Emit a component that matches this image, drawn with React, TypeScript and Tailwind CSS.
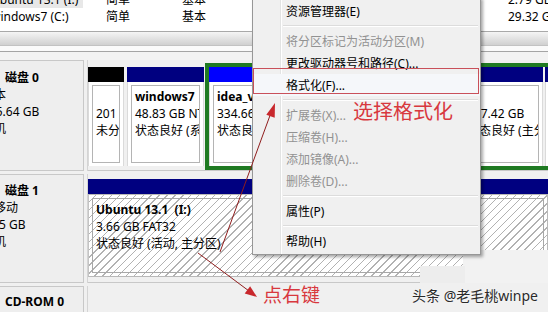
import React from "react";

function ListRow({ name, size, selected }: { name: string; size: string; selected?: boolean }) {
  return (
    <div className="flex h-[17px] items-center whitespace-nowrap">
      <div className={`w-[83px] h-[17px] shrink-0 overflow-hidden flex items-center ${selected ? "bg-[#e8e8e8]" : ""}`}>
        <span className="ml-[-9px]">{name}</span>
      </div>
      <div className="w-[76px] shrink-0 pl-[23px]">简单</div>
      <div className="w-[349px] shrink-0 pl-[23px]">基本</div>
      <div className="shrink-0">{size}</div>
    </div>
  );
}

function Part({
  outer,
  bar,
  inner,
  lines,
}: {
  outer: string;
  bar: string;
  inner: string;
  lines: [string, string, string];
}) {
  return (
    <div className={`shrink-0 ${outer}`}>
      <div className={`h-[15px] ${bar}`} />
      <div className="h-[84px] bg-white border-x border-[#dadada] p-[3px]">
        <div className={`h-full border border-[#b4b4b4] pt-[2px] overflow-hidden whitespace-nowrap ${inner}`}>
          <div className="font-bold h-[17px]">{lines[0]}</div>
          <div className="h-[17px]">{lines[1]}</div>
          <div className="h-[17px]">{lines[2]}</div>
        </div>
      </div>
    </div>
  );
}

function DiskLabel({ title, lines, pt }: { title: string; lines: string[]; pt: string }) {
  return (
    <div className={`w-[84px] shrink-0 bg-[#eeeeee] border-t border-b border-r border-[#c8c8c8] overflow-hidden whitespace-nowrap ${pt}`}>
      <div className="ml-[-18px]">
        <div className="pl-[23px] font-bold h-[17px]">{title}</div>
        {lines.map((l) => (
          <div key={l} className="h-[17px]">
            {l}
          </div>
        ))}
      </div>
    </div>
  );
}

function MenuItem({ label, disabled, hover }: { label: string; disabled?: boolean; hover?: boolean }) {
  return (
    <div
      className={`h-[22px] flex items-center pl-[33px] whitespace-nowrap ${disabled ? "text-[#929292]" : "text-black"} ${
        hover ? "bg-[#f5f7fa]" : ""
      }`}
    >
      {label}
    </div>
  );
}

function MenuSep() {
  return (
    <div className="h-[8px] flex flex-col justify-center pl-[30px] pr-[2px]">
      <div className="h-px bg-[#dcdcdc]" />
      <div className="h-px bg-white" />
    </div>
  );
}

export default function App() {
  return (
    <div className="relative w-[548px] h-[312px] overflow-hidden bg-[#f0f0f0] text-[12px] leading-[17px] text-black font-['Noto_Sans','Noto_Sans_CJK_SC',sans-serif]">
      {/* top volume list */}
      <div className="mt-[-10px] h-[41px] bg-white pt-[1px]">
        <ListRow name="Ubuntu 13.1 (I:)" size="2.79 GB" selected />
        <ListRow name="windows7 (C:)" size="29.32 GB" />
      </div>
      <div className="h-px bg-[#a9a9a9]" />
      <div className="h-[13px] bg-gradient-to-b from-[#f5f5f5] to-[#d0d0d0]" />
      <div className="h-px bg-[#c2c2c2]" />
      <div className="h-[5px] bg-[#fafafa]" />
      <div className="h-px bg-[#a5a5a5]" />
      <div className="h-[8px] bg-[#f3f3f3]" />

      {/* disks */}
      <div className="flex flex-col gap-[3px]">
        {/* disk 0 */}
        <div className="flex h-[111px]">
          <DiskLabel title="磁盘 0" lines={["基本", "465.64 GB", "联机"]} pt="pt-[8px]" />
          <div className="w-[4px] shrink-0 border-r border-[#d4d4d4]" />
          <div className="flex-1 overflow-hidden flex items-start pt-[3px] border-b border-[#c8c8c8]">
            <Part
              outer="w-[36px] mt-[4px]"
              bar="bg-black"
              inner="pl-[3px]"
              lines={["", "201 MB", "未分配"]}
            />
            <Part
              outer="w-[77px] mt-[4px] ml-[3px]"
              bar="bg-[#000080]"
              inner="pl-[3px]"
              lines={["windows7", "48.83 GB NTFS", "状态良好 (系统, 启动, 页面文件)"]}
            />
            <div className="ml-[1px] flex-1 flex border-[4px] border-r-0 border-[#1f7a22]">
              <Part
                outer="w-[246px]"
                bar="bg-[#0000ff]"
                inner="pl-[3px]"
                lines={["idea_vm", "334.66 GB NTFS", "状态良好 (逻辑驱动器)"]}
              />
              <Part
                outer="w-[85px] ml-[3px]"
                bar="bg-[#000080]"
                inner="pl-[4px]"
                lines={["", "117.42 GB", "状态良好 (主分区)"]}
              />
              <Part outer="w-[60px] ml-[2px]" bar="bg-[#000080]" inner="pl-[3px]" lines={["", "", ""]} />
            </div>
          </div>
        </div>

        {/* disk 1 */}
        <div className="flex h-[109px]">
          <DiskLabel title="磁盘 1" lines={["可移动", "3.65 GB", "联机"]} pt="pt-[7px]" />
          <div className="w-[4px] shrink-0 border-r border-[#d4d4d4]" />
          <div className="flex-1 overflow-hidden pt-[5px] border-b border-[#c8c8c8]">
            <div className="h-[15px] bg-[#000080]" />
            <div className="h-[83px] border border-[#b8b8b8] border-l-[#c4c4c4] p-[3px] bg-[repeating-linear-gradient(135deg,#ffffff_0px,#ffffff_4.6px,#b2b2b2_4.6px,#b2b2b2_5.6px)]">
              <div className="h-full border border-[#a8a8a8] pl-[3px] pt-[2px] whitespace-nowrap">
                <div className="font-bold h-[17px] whitespace-pre">Ubuntu 13.1  (I:)</div>
                <div className="h-[17px]">3.66 GB FAT32</div>
                <div className="h-[17px]">状态良好 (活动, 主分区)</div>
              </div>
            </div>
          </div>
        </div>

        {/* cd-rom */}
        <div className="flex h-[40px]">
          <div className="w-[84px] shrink-0 bg-[#eeeeee] border-t border-r border-[#c8c8c8] pt-[6px] overflow-hidden whitespace-nowrap">
            <div className="ml-[-18px] pl-[23px] font-bold">CD-ROM 0</div>
          </div>
          <div className="w-[4px] shrink-0 border-r border-[#d4d4d4]" />
          <div className="flex-1 bg-[#f0f0f0]" />
        </div>
      </div>

      {/* watermark blur patch */}
      <div className="absolute left-[463px] top-[250px] w-[85px] h-[33px] bg-[#f2f2f2]" />
      <div className="absolute left-[420px] top-[266px] w-[45px] h-[17px] bg-[#ededed]" />

      {/* context menu */}
      <div className="absolute left-[252px] top-[-3px] w-[229px] bg-[#f0f0f0] border border-[#979797] py-[2px] shadow-[2px_2px_3px_rgba(0,0,0,0.35)]">
        <div className="absolute left-[27px] top-0 bottom-0 w-px bg-[#e2e3e3]" />
        <div className="absolute left-[28px] top-0 bottom-0 w-px bg-white" />
        <div className="relative">
          <MenuItem label="资源管理器(E)" />
          <MenuSep />
          <MenuItem label="将分区标记为活动分区(M)" disabled />
          <MenuItem label="更改驱动器号和路径(C)..." />
          <MenuItem label="格式化(F)..." hover />
          <MenuSep />
          <MenuItem label="扩展卷(X)..." disabled />
          <MenuItem label="压缩卷(H)..." disabled />
          <MenuItem label="添加镜像(A)..." disabled />
          <MenuItem label="删除卷(D)..." disabled />
          <MenuSep />
          <MenuItem label="属性(P)" />
          <MenuSep />
          <MenuItem label="帮助(H)" />
        </div>
      </div>

      {/* red annotation box */}
      <div className="absolute left-[253px] top-[68px] w-[226px] h-[26px] border-[1.5px] border-[#c9505a]" />

      {/* arrows */}
      <svg className="absolute left-0 top-0 pointer-events-none" width="548" height="312" viewBox="0 0 548 312">
        <line x1="220" y1="252" x2="272" y2="110" stroke="#8f1d1d" strokeWidth="1" />
        <polygon points="275,103 266.3,114.7 274.7,117.7" fill="#c8282d" />
        <line x1="198" y1="253" x2="249" y2="291" stroke="#8f1d1d" strokeWidth="1" />
        <polygon points="257,297 244.7,293.4 250.1,286.2" fill="#c8282d" />
      </svg>

      {/* annotation texts */}
      <div className="absolute left-[353px] top-[99px] text-[20px] leading-[26px] text-[#d8383e] whitespace-nowrap">
        选择格式化
      </div>
      <div className="absolute left-[263px] top-[283px] text-[19px] leading-[24px] text-[#d8383e] whitespace-nowrap">
        点右键
      </div>

      {/* watermark */}
      <div className="absolute left-[412px] top-[287px] text-[14px] leading-[18px] text-[#2a2a2a] whitespace-nowrap [text-shadow:0_0_2px_#ffffff]">
        头条 @老毛桃winpe
      </div>
    </div>
  );
}
